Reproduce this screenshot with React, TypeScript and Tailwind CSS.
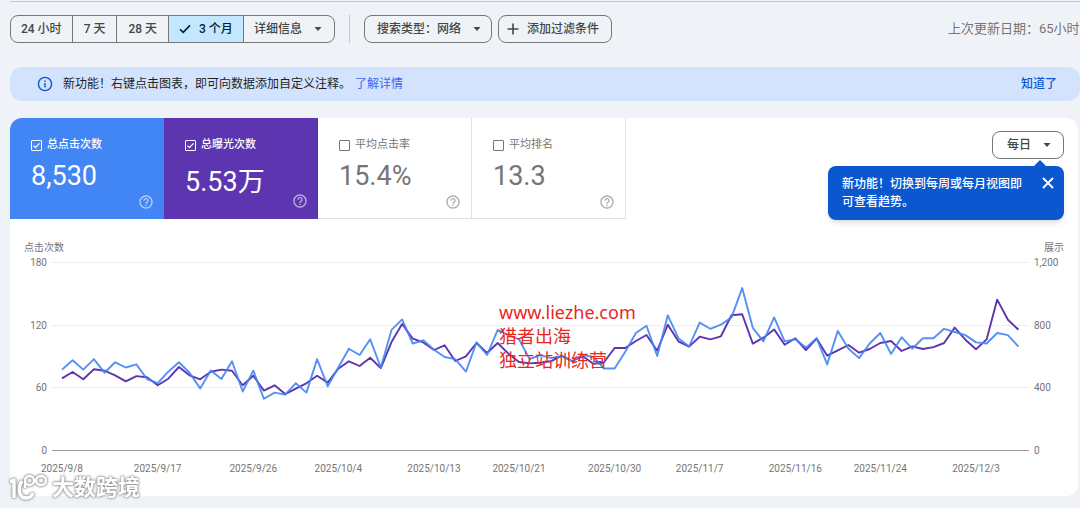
import { useState } from 'react';

const CLICKS = [
  77, 86, 77, 87, 74, 84, 79, 82, 68, 64, 75, 84, 74, 59, 76, 68, 85, 56, 76, 49, 55, 53, 64, 55, 87, 61, 79, 97, 91, 106,
  79, 115, 125, 102, 105, 96, 89, 87, 75, 103, 91, 115, 110, 106, 87, 91, 88, 90, 85, 91, 89, 78, 78, 94, 112, 119, 90, 129,
  107, 99, 122, 116, 120, 127, 155, 117, 104, 127, 104, 106, 98, 107, 82, 114, 97, 88, 102, 112, 92, 108, 97, 107, 107, 116,
  113, 110, 103, 102, 112, 110, 99,
];

const IMPRESSIONS = [
  457, 498, 451, 515, 506, 477, 438, 472, 464, 413, 455, 530, 477, 451, 500, 513, 506, 413, 474, 379, 413, 357, 391, 426,
  474, 430, 519, 566, 536, 589, 523, 689, 804, 711, 687, 638, 668, 568, 598, 683, 619, 683, 615, 562, 553, 557, 566, 602,
  568, 598, 551, 560, 651, 651, 696, 734, 634, 800, 694, 660, 723, 706, 726, 860, 866, 679, 717, 770, 672, 713, 638, 711,
  602, 636, 670, 621, 645, 683, 696, 632, 662, 645, 657, 683, 781, 704, 643, 706, 960, 832, 768,
];

const DATES = [
  { day: 0, label: '2025/9/8' },
  { day: 9, label: '2025/9/17' },
  { day: 18, label: '2025/9/26' },
  { day: 26, label: '2025/10/4' },
  { day: 35, label: '2025/10/13' },
  { day: 43, label: '2025/10/21' },
  { day: 52, label: '2025/10/30' },
  { day: 60, label: '2025/11/7' },
  { day: 69, label: '2025/11/16' },
  { day: 77, label: '2025/11/24' },
  { day: 86, label: '2025/12/3' },
];

const METRICS = [
  { id: 'clicks', label: '总点击次数', value: '8,530', card: 'bg-[#4285f4] font-medium text-white', lead: 'leading-9' },
  { id: 'impressions', label: '总曝光次数', value: '5.53万', card: 'bg-[#5e35b1] font-medium text-white', lead: '-mb-4 leading-[48px]' },
  { id: 'ctr', label: '平均点击率', value: '15.4%', card: 'border-r border-b border-[#e0e0e0] text-[#757575]', lead: 'leading-9' },
  { id: 'position', label: '平均排名', value: '13.3', card: 'border-r border-b border-[#e0e0e0] text-[#757575]', lead: 'leading-9' },
];

const RANGES = ['24 小时', '7 天', '28 天', '3 个月'];

const BASE = 216;
const PLOT_HEIGHT = 188;
const dayX = (day: number) => 52 + (day * 956.5) / 90;

function linePoints(values: number[], max: number) {
  return values.map((v, i) => `${dayX(i).toFixed(1)},${(BASE - (v / max) * PLOT_HEIGHT).toFixed(1)}`).join(' ');
}

function Caret() {
  return (
    <svg viewBox="0 0 8 4" className="h-1 w-2" fill="currentColor" aria-hidden="true">
      <path d="M0.5 0h7L4 4z" />
    </svg>
  );
}

function HelpIcon() {
  return (
    <svg viewBox="0 0 24 24" className="size-4" fill="currentColor" aria-hidden="true">
      <path d="M11 18h2v-2h-2v2zm1-16C6.48 2 2 6.48 2 12s4.48 10 10 10 10-4.48 10-10S17.52 2 12 2zm0 18c-4.41 0-8-3.59-8-8s3.59-8 8-8 8 3.59 8 8-3.59 8-8 8zm0-14c-2.21 0-4 1.79-4 4h2c0-1.1.9-2 2-2s2 .9 2 2c0 2-3 1.75-3 5h2c0-2.25 3-2.5 3-5 0-2.21-1.79-4-4-4z" />
    </svg>
  );
}

function Toolbar({ range, onRange }: { range: string; onRange: (r: string) => void }) {
  return (
    <div className="flex h-7 items-center text-xs font-medium whitespace-nowrap text-[#444746]">
      <div className="flex h-7 shrink-0 divide-x divide-[#747775] overflow-hidden rounded-lg border border-[#747775]">
        {RANGES.map((r) => (
          <button
            key={r}
            onClick={() => onRange(r)}
            className={r === range ? 'flex items-center gap-2 bg-[#c2e7ff] px-2.5 text-[#001d35]' : 'px-[11px] first:px-2.5'}
          >
            {r === range && (
              <svg viewBox="0 0 12 10" className="h-2.5 w-3" fill="none" stroke="currentColor" strokeWidth="1.6" aria-hidden="true">
                <path d="M1 5.2l3.2 3.2L11 1.4" />
              </svg>
            )}
            {r}
          </button>
        ))}
        <button className="flex items-center gap-3 pr-3 pl-2.5">
          详细信息
          <Caret />
        </button>
      </div>
      <div className="mx-3.5 h-7 w-px shrink-0 bg-[#c4c7c5]" />
      <button className="flex h-7 shrink-0 items-center gap-3 rounded-lg border border-[#747775] pr-2.5 pl-3">
        搜索类型：网络
        <Caret />
      </button>
      <button className="ml-1.5 flex h-7 shrink-0 items-center gap-2 rounded-lg border border-[#747775] pr-3 pl-2">
        <svg viewBox="0 0 12 12" className="size-3" fill="none" stroke="currentColor" strokeWidth="1.6" aria-hidden="true">
          <path d="M6 0.5v11M0.5 6h11" />
        </svg>
        添加过滤条件
      </button>
      <p className="ml-auto w-[132px] shrink-0 overflow-hidden text-[13px] font-normal text-[#757575]">上次更新日期：65小时前</p>
    </div>
  );
}

function Banner() {
  return (
    <div className="mt-6 flex h-[34px] items-center rounded-xl bg-[#d3e3fd] pr-[23px] pl-[27px] text-xs text-[#1f1f1f]">
      <svg viewBox="0 0 16 16" className="size-4 text-[#0b57d0]" fill="none" stroke="currentColor" strokeWidth="1.4" aria-hidden="true">
        <circle cx="8" cy="8" r="6.6" />
        <path d="M8 7v4.4M8 4.4v1.5" />
      </svg>
      <p className="ml-2.5">
        新功能！右键点击图表，即可向数据添加自定义注释。
        <a href="#annotations" className="ml-1 text-[#3d63f5]">了解详情</a>
      </p>
      <button className="ml-auto font-medium text-[#0b57d0]">知道了</button>
    </div>
  );
}

function MetricCards() {
  const [checked, setChecked] = useState<string[]>(['clicks', 'impressions']);

  const toggle = (id: string) => {
    setChecked(checked.includes(id) ? checked.filter((c) => c !== id) : [...checked, id]);
  };

  return (
    <div className="flex">
      {METRICS.map((m) => (
        <div key={m.id} className={`flex h-[101px] w-[154px] flex-col pt-[18px] pr-2.5 pb-2.5 pl-[21px] ${m.card}`}>
          <label className="flex items-center gap-[5px] text-[11px] leading-[18px]">
            <span className="relative size-[11px]">
              <input
                type="checkbox"
                checked={checked.includes(m.id)}
                onChange={() => toggle(m.id)}
                className="block size-[11px] appearance-none rounded-[1px] border border-current"
              />
              {checked.includes(m.id) && (
                <svg viewBox="0 0 11 11" className="pointer-events-none absolute inset-0" fill="none" stroke="currentColor" strokeWidth="1.3" aria-hidden="true">
                  <path d="M2.5 5.6l2 2 4-4.2" />
                </svg>
              )}
            </span>
            {m.label}
          </label>
          <p className={`mt-1 text-[27px] font-normal ${m.lead}`}>{m.value}</p>
          <button aria-label="帮助" className="mt-auto self-end opacity-60">
            <HelpIcon />
          </button>
        </div>
      ))}
    </div>
  );
}

function Granularity() {
  const [tip, setTip] = useState(true);

  return (
    <div className="relative mt-[13px] mr-3.5">
      <button className="flex h-7 w-[72px] items-center justify-between rounded-lg border border-[#747775] pr-3 pl-3.5 text-xs font-medium text-[#444746]">
        每日
        <Caret />
      </button>
      {tip && (
        <div className="absolute top-[35px] right-0 flex w-[236px] items-start justify-between rounded-lg bg-[#0b57d0] py-[9px] pr-2.5 pl-3.5 text-xs leading-[18px] font-medium text-white shadow-md">
          <svg viewBox="0 0 12 6" className="absolute -top-1.5 right-[18px] h-1.5 w-3" fill="#0b57d0" aria-hidden="true">
            <path d="M6 0l6 6H0z" />
          </svg>
          <p className="w-[182px]">新功能！切换到每周或每月视图即可查看趋势。</p>
          <button aria-label="关闭" onClick={() => setTip(false)} className="mt-0.5">
            <svg viewBox="0 0 12 12" className="size-3" fill="none" stroke="currentColor" strokeWidth="1.8" aria-hidden="true">
              <path d="M1 1l10 10M11 1L1 11" />
            </svg>
          </button>
        </div>
      )}
    </div>
  );
}

function Chart() {
  return (
    <svg viewBox="0 0 1068 245" className="mt-[15px] block w-full text-[10px]" fill="#757575" role="img" aria-label="点击次数 / 展示">
      <text x="14" y="17">点击次数</text>
      <text x="1054" y="17" textAnchor="end">展示</text>
      {[0, 1, 2, 3].map((n) => {
        const y = BASE - (n * PLOT_HEIGHT) / 3;
        return (
          <g key={n}>
            <rect x="42" y={Math.round(y)} width="977" height="1" fill={n === 0 ? '#9e9e9e' : '#eeeeee'} />
            <text x="37" y={y + 4} textAnchor="end">{n * 60}</text>
            <text x="1024" y={y + 4}>{(n * 400).toLocaleString('en-US')}</text>
          </g>
        );
      })}
      {DATES.map((d) => (
        <text key={d.day} x={dayX(d.day)} y="238" textAnchor="middle">{d.label}</text>
      ))}
      <g fill="none" strokeWidth="1.9" strokeLinejoin="round">
        <polyline points={linePoints(IMPRESSIONS, 1200)} stroke="#5e35b1" />
        <polyline points={linePoints(CLICKS, 180)} stroke="#4285f4" opacity="0.9" />
      </g>
    </svg>
  );
}

function Watermark() {
  return (
    <div className="absolute bottom-1.5 left-2 flex items-center gap-1 text-[22px] leading-7 font-bold text-white [filter:drop-shadow(0_0_1px_#888)_drop-shadow(0_0_1px_#aaa)]">
      <svg viewBox="0 0 40 28" className="h-7 w-10" fill="none" stroke="currentColor" strokeWidth="3.4" aria-hidden="true">
        <path d="M2 7.5l4-1V24" />
        <path d="M14 7c-5 7-3 17 4 17 4 0 6-2 7-5" />
        <g strokeWidth="2.4">
          <path d="M17 14V7" />
          <circle cx="21.5" cy="6.5" r="4.5" />
          <ellipse cx="33" cy="6.5" rx="5" ry="4.5" />
        </g>
      </svg>
      大数跨境
    </div>
  );
}

export default function App() {
  const [range, setRange] = useState('3 个月');

  return (
    <div className="relative overflow-hidden bg-[#eff3f8] pb-3 pl-2.5 font-[Roboto,'Noto_Sans_CJK_SC',sans-serif]">
      <div className="mb-[13px] h-0.5 border-b border-[#c4c7c5]" />
      <Toolbar range={range} onRange={setRange} />
      <Banner />
      <main className="relative mt-[17px] mr-0.5 rounded-xl bg-white pb-[17px]">
        <div className="flex items-start justify-between">
          <div className="overflow-hidden rounded-tl-xl">
            <MetricCards />
          </div>
          <Granularity />
        </div>
        <Chart />
        <div className="absolute top-[182px] left-[489px] font-['Noto_Sans','Noto_Sans_CJK_SC',sans-serif] text-lg leading-6 text-[#e8281e]">
          <p>www.liezhe.com</p>
          <p>猎者出海</p>
          <p>独立站训练营</p>
        </div>
      </main>
      <Watermark />
    </div>
  );
}
